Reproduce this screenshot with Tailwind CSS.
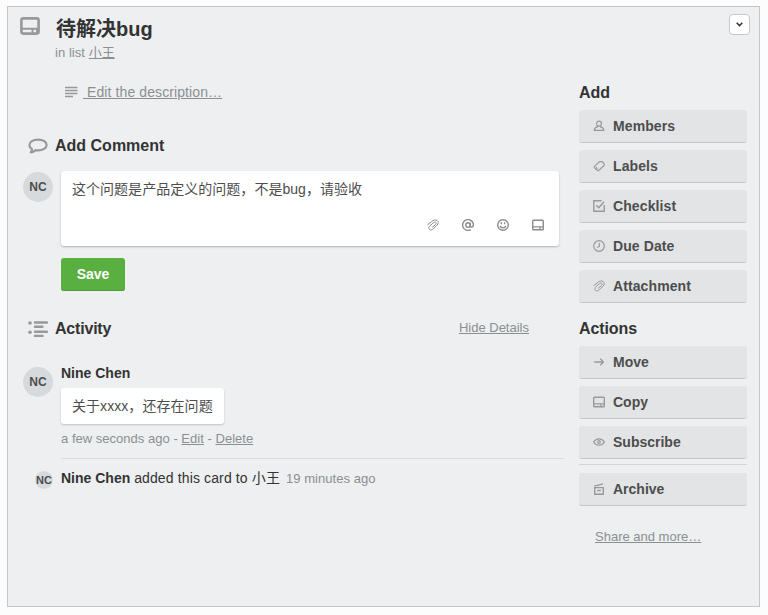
<!DOCTYPE html>
<html lang="en">
  <head>
    <meta charset="UTF-8" />
    <meta name="viewport" content="width=device-width, initial-scale=1.0" />
    <title>待解决bug</title>
    <script src="https://cdn.jsdelivr.net/npm/@tailwindcss/browser@4"></script>
  </head>

  <body
    class="bg-[#fbfcfb] h-[615px] overflow-hidden pl-[7px] pt-[6px] text-sm leading-5 text-[#4d4d4d] font-['Liberation_Sans','Noto_Sans_CJK_SC',sans-serif]"
  >
    <!-- Shared icons -->
    <svg class="hidden">
      <symbol id="icon-card" viewBox="0 0 20 18">
        <rect x="1.4" y="1.4" width="17.2" height="15.2" rx="2" fill="none" stroke="currentColor" stroke-width="2.6" />
        <path d="M1.5 11.8h17M12.5 12v4" fill="none" stroke="currentColor" stroke-width="2" />
        <path d="M16 12h2v4h-2z" fill="currentColor" />
      </symbol>
      <symbol id="icon-card-sm" viewBox="0 0 12 12">
        <rect x=".7" y="1.2" width="10.6" height="9.6" rx=".8" fill="none" stroke="currentColor" stroke-width="1.4" />
        <path d="M.6 7.8h10.8M8 8v3" fill="none" stroke="currentColor" stroke-width="1.3" />
      </symbol>
      <symbol id="icon-clip" viewBox="0 0 12 12">
        <path
          d="M.8 5.6 4.6 2.600C6.300 1.200 8.500.5 10.100 1.400c1.600 1 1.500 3.200 0 4.700L6.500 9.700c-1.300 1.200-3 1.700-4.100.7-1-1-.7-2.500.5-3.600l3.600-3.100c.9-.7 1.900-.8 2.400-.2.5.7.2 1.500-.5 2.200L5.400 8.200"
          fill="none"
          stroke="currentColor"
          stroke-linecap="round"
        />
      </symbol>
    </svg>

    <div class="w-[753px] h-[601px] border border-[#c3c7c6] bg-[#edeff0]">
      <!-- Card header -->
      <div class="h-[75px] flex pl-3 pr-[9px] pt-[7px]">
        <svg class="w-5 h-[18px] mt-[3px] text-[#999]"><use href="#icon-card" /></svg>
        <div class="ml-[15px] pt-[3px] flex-1">
          <h2 class="pl-px text-xl leading-6 font-bold text-[#333]">待解决bug</h2>
          <p class="text-[13px] leading-[18px] mt-[3px] text-[#8a9090] tracking-[0.05px]">
            in list <a href="#" class="underline">小王</a>
          </p>
        </div>
        <button
          class="w-[21px] h-[21px] flex items-center justify-center rounded border border-[#c6c8c9] bg-white"
        >
          <svg class="w-[7px] h-[5px]" viewBox="0 0 7 5">
            <path d="M.7.8 3.500 3.600 6.300.8" fill="none" stroke="#333" stroke-width="1.500" />
          </svg>
        </button>
      </div>

      <div class="flex">
        <!-- Main column -->
        <div class="w-[571px]">
          <a href="#" class="flex items-center h-5 pl-[57px] text-[#8a9090]">
            <svg class="w-[13px] h-3" viewBox="0 0 13 12">
              <path d="M0 1.500h12.500M0 4.500h12.500M0 7.500h12.500M0 10.500h8" stroke="#999" stroke-width="1.400" />
            </svg>
            <span class="ml-[5px] underline whitespace-pre tracking-[0.1px]"> Edit the description…</span>
          </a>

          <!-- Add comment -->
          <div class="flex items-center mt-[34px] h-5 pl-5 text-[#999]">
            <svg class="w-5 h-4" viewBox="0 0 20 16">
              <path
                d="M10 1.600C5.300 1.600 1.400 3.800 1.400 6.900c0 1.700 1 3.100 2.500 4 .1 1.200-.3 2.300-1.100 3.500 2-.2 3.500-.9 4.600-2.200.8.100 1.700.200 2.600.200 4.800 0 8.600-2.300 8.600-5.500S14.800 1.600 10 1.600z"
                fill="none"
                stroke="currentColor"
                stroke-width="2.2"
                stroke-linejoin="round"
              />
            </svg>
            <h3 class="ml-[7px] text-base leading-5 font-bold text-[#333]">Add Comment</h3>
          </div>
          <div class="flex mt-[15px] pl-[15px]">
            <div
              class="w-[30px] h-[30px] mt-px rounded-full bg-[#d6dadc] flex items-center justify-center text-xs font-bold text-[#4d4d4d]"
            >
              NC
            </div>
            <div class="ml-2">
              <div
                class="w-[498px] h-[75px] flex flex-col justify-between rounded-[3px] bg-white pl-[11px] pr-[15.5px] pt-2 pb-[15px] shadow-[0_1px_2px_rgba(0,0,0,0.25)]"
              >
                <p class="tracking-[0.03px]">这个问题是产品定义的问题，不是bug，请验收</p>
                <div class="flex justify-end gap-[23px] text-[#8c8c8c]">
                  <svg class="w-3 h-3"><use href="#icon-clip" /></svg>
                  <svg class="w-3 h-3" viewBox="0 0 12 12" fill="none" stroke="currentColor" stroke-width="1.4">
                    <circle cx="6" cy="6" r="2.200" />
                    <path d="M8.200 3.700v3.100c0 1.900 3.200 1.600 3.200-.8A5.400 5.400 0 1 0 8.800 10.600" />
                  </svg>
                  <svg class="w-3 h-3" viewBox="0 0 12 12" fill="none" stroke="currentColor" stroke-width="1.4">
                    <circle cx="6" cy="6" r="5.300" />
                    <path d="M4.400 3.200v2M7.600 3.200v2M3.200 6.800c.6 2.700 5 2.700 5.600 0" />
                  </svg>
                  <svg class="w-3 h-3"><use href="#icon-card-sm" /></svg>
                </div>
              </div>
              <button
                class="mt-3 w-16 h-[33px] pb-0.5 rounded-[3px] bg-[#5aaf41] text-white font-bold shadow-[inset_0_-1px_0_#4fa03a]"
              >
                Save
              </button>
            </div>
          </div>

          <!-- Activity -->
          <div class="flex items-center mt-7 h-5 pl-5">
            <svg class="w-5 h-[18px]" viewBox="0 0 20 18">
              <g stroke="#999" stroke-width="2.400" stroke-linecap="round">
                <path d="M7 2.500h12M7 6.700h7.500M7 11.700h12M7 15.900h7.500" />
              </g>
              <circle cx="2" cy="3" r="1.800" fill="#999" />
              <circle cx="2" cy="12.300" r="1.800" fill="#999" />
            </svg>
            <h3 class="ml-[7px] text-base leading-5 font-bold text-[#333] tracking-[-0.2px]">Activity</h3>
            <a href="#" class="ml-auto mr-[50px] mb-0.5 text-[13px] underline text-[#8a9090]">Hide Details</a>
          </div>

          <div class="flex mt-6 pl-[15px]">
            <div
              class="w-[30px] h-[30px] mt-1 rounded-full bg-[#d6dadc] flex items-center justify-center text-xs font-bold text-[#4d4d4d]"
            >
              NC
            </div>
            <div class="ml-2 w-[503px] h-24 border-b border-[#d9dcde]">
              <p class="font-bold text-[#333]">Nine Chen</p>
              <div
                class="mt-[5px] w-[163px] h-9 pl-[11px] rounded-[3px] bg-white leading-9 tracking-[0.06px] shadow-[0_1px_2px_rgba(0,0,0,0.2)]"
              >
                关于xxxx，还存在问题
              </div>
              <p class="mt-1.5 text-[13px] leading-[18px] text-[#8a9090] tracking-[0.02px]">
                a few seconds ago - <a href="#" class="underline">Edit</a> -
                <a href="#" class="underline">Delete</a>
              </p>
            </div>
          </div>

          <div class="flex mt-[9px] pl-[27px]">
            <div
              class="w-[18px] h-[18px] mt-[3px] rounded-full bg-[#d6dadc] flex items-center justify-center text-[11px] font-bold text-[#4d4d4d]"
            >
              NC
            </div>
            <p class="ml-2 text-[#333]">
              <b>Nine Chen</b> <span class="tracking-[0.13px]">added this card to 小王</span>
              <span class="ml-[2px] text-[13px] text-[#8a9090] tracking-[0.05px]">19 minutes ago</span>
            </p>
          </div>
        </div>

        <!-- Sidebar -->
        <div class="w-[168px]">
          <h3 class="pt-px text-base leading-5 font-bold text-[#333]">Add</h3>
          <div class="mt-[7px] flex flex-col gap-[7px] font-bold tracking-[0.1px]">
            <a href="#" class="flex items-center h-[33px] pl-[14px] gap-2 rounded-[3px] bg-[#e2e4e6] border-b border-[#c2c6c9]">
              <svg class="w-3 h-3 text-[#999]" viewBox="0 0 12 12" fill="none" stroke="currentColor" stroke-width="1.2">
                <circle cx="6" cy="3.600" r="2.500" />
                <path d="M4.500 5.800v1C2.500 7.300 1.200 8.200 1.200 10.400h9.600c0-2.200-1.300-3.100-3.300-3.600v-1" />
              </svg>
              Members
            </a>
            <a href="#" class="flex items-center h-[33px] pl-[14px] gap-2 rounded-[3px] bg-[#e2e4e6] border-b border-[#c2c6c9]">
              <svg class="w-3 h-3 text-[#999]" viewBox="0 0 12 12" fill="none" stroke="currentColor" stroke-width="1.2">
                <path d="M6.600 1.600h2.600l1.900 1.900v2L5.600 10.500q-.6.500-1.200 0L1.400 7.600q-.5-.6 0-1.200z" />
                <path d="M3 7.300l1.500 1.500" />
              </svg>
              Labels
            </a>
            <a href="#" class="flex items-center h-[33px] pl-[14px] gap-2 rounded-[3px] bg-[#e2e4e6] border-b border-[#c2c6c9]">
              <svg class="w-3 h-3 text-[#999]" viewBox="0 0 12 12" fill="none" stroke="currentColor">
                <path d="M8.500.8H.8v10.400h10.400V5M3.300 5.200 5.800 7.800 11 1.700" stroke-width="1.4" />
              </svg>
              Checklist
            </a>
            <a href="#" class="flex items-center h-[33px] pl-[14px] gap-2 rounded-[3px] bg-[#e2e4e6] border-b border-[#c2c6c9]">
              <svg class="w-3 h-3 text-[#999]" viewBox="0 0 12 12" fill="none" stroke="currentColor" stroke-width="1.2">
                <circle cx="6" cy="6" r="5.300" />
                <path d="M6.300 2.800v3.600L4.200 7.600" />
              </svg>
              Due Date
            </a>
            <a href="#" class="flex items-center h-[33px] pl-[14px] gap-2 rounded-[3px] bg-[#e2e4e6] border-b border-[#c2c6c9]">
              <svg class="w-3 h-3 text-[#999]"><use href="#icon-clip" /></svg>
              Attachment
            </a>
          </div>

          <h3 class="mt-[15px] pt-px text-base leading-5 font-bold text-[#333] tracking-[-0.1px]">Actions</h3>
          <div class="mt-[7px] flex flex-col gap-[7px] font-bold">
            <a href="#" class="flex items-center h-[33px] pl-[14px] gap-2 rounded-[3px] bg-[#e2e4e6] border-b border-[#c2c6c9]">
              <svg class="w-3 h-3 text-[#999]" viewBox="0 0 12 12" fill="none" stroke="currentColor">
                <path d="M1.200 6h9.200M7.200 2.800 10.400 6 7.200 9.200" stroke-width="1.300" />
              </svg>
              Move
            </a>
            <a href="#" class="flex items-center h-[33px] pl-[14px] gap-2 rounded-[3px] bg-[#e2e4e6] border-b border-[#c2c6c9]">
              <svg class="w-3 h-3 text-[#999]"><use href="#icon-card-sm" /></svg>
              Copy
            </a>
            <a href="#" class="flex items-center h-[33px] pl-[14px] gap-2 rounded-[3px] bg-[#e2e4e6] border-b border-[#c2c6c9]">
              <svg class="w-3 h-3 text-[#999]" viewBox="0 0 12 12" fill="none" stroke="currentColor" stroke-width="1.2">
                <path d="M.6 6C3 1.700 9 1.700 11.400 6 9 10.300 3 10.300.6 6z" />
                <circle cx="6" cy="6" r="1.300" />
              </svg>
              Subscribe
            </a>
          </div>
          <hr class="mt-[5px] border-[#d3d6d8]" />
          <a
            href="#"
            class="mt-2 flex items-center h-[33px] pl-[14px] gap-2 rounded-[3px] bg-[#e2e4e6] border-b border-[#c2c6c9] font-bold"
          >
            <svg class="w-3 h-3 text-[#999]" viewBox="0 0 12 12" fill="none" stroke="currentColor" stroke-width="1.4">
              <path d="M1.700 4.600h8.600v6.600H1.700zM1.300 3.200l8.700-2.400M4.200 7.500h3.600" />
            </svg>
            Archive
          </a>
          <a href="#" class="block mt-[21px] ml-4 text-[13px] underline text-[#8a9090]">Share and more…</a>
        </div>
      </div>
    </div>
  </body>
</html>
